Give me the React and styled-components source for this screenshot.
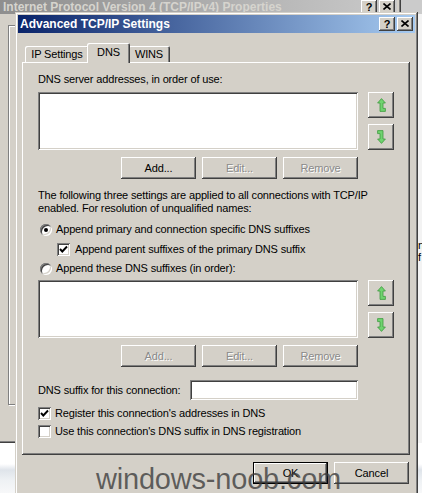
import React from 'react';
import styled, { createGlobalStyle, css } from 'styled-components';

const FACE = '#d4d0c8';

const GlobalStyle = createGlobalStyle`
  html, body { margin: 0; padding: 0; }
  body {
    width: 422px;
    height: 493px;
    overflow: hidden;
    font-family: "Liberation Sans", Arial, sans-serif;
    font-size: 11px;
    color: #000;
  }
  * { box-sizing: border-box; }
`;

const raisedEdge = css`
  box-shadow: inset -1px -1px #404040, inset 1px 1px #ffffff,
    inset -2px -2px #808080, inset 2px 2px ${FACE};
`;
const sunkenEdge = css`
  box-shadow: inset 1px 1px #808080, inset -1px -1px #ffffff,
    inset 2px 2px #404040, inset -2px -2px ${FACE};
`;
const windowEdge = css`
  box-shadow: inset -1px -1px #404040, inset 1px 1px ${FACE},
    inset -2px -2px #808080, inset 2px 2px #ffffff;
`;
const defaultEdge = css`
  box-shadow: inset 0 0 0 1px #000000, inset -2px -2px #404040,
    inset 2px 2px #ffffff, inset -3px -3px #808080;
`;

const Desktop = styled.div`
  position: relative;
  width: 422px;
  height: 493px;
  overflow: hidden;
  background: linear-gradient(to bottom, #ffffff 0, #ffffff 464px, #dfe4ea 470px, #eef1f4 480px, #f7f8f9 493px);
`;

const FarWindow = styled.div`
  position: absolute;
  left: 401px;
  top: 0;
  width: 40px;
  height: 443px;
  background: #f3f3f3;
  display: flex;
  flex-direction: column;
`;
const FarTitle = styled.div`
  height: 14px;
  background: #cbcbcb;
`;
const FarText = styled.div`
  padding: 225px 0 0 17px;
  line-height: 12px;
  white-space: pre;
`;

const BackWindow = styled.div`
  position: absolute;
  left: -4px;
  top: -8px;
  width: 405px;
  height: 451px;
  background: ${FACE};
  padding: 4px;
  ${windowEdge}
  display: flex;
  flex-direction: column;
`;

const Caption = styled.div`
  height: 18px;
  flex: none;
  display: flex;
  align-items: center;
  justify-content: space-between;
  padding: ${(p) => p.$pad};
  background: ${(p) =>
    p.$active
      ? 'linear-gradient(to right, #0a246a, #a6caf0)'
      : 'linear-gradient(to right, #8e8e8e, #cacaca)'};
  color: ${(p) => (p.$active ? '#ffffff' : '#d6d4ce')};
  font-weight: bold;
  font-size: 12px;
  white-space: nowrap;
`;

const CaptionButtons = styled.div`
  display: flex;
  gap: 2px;
`;

const CapButton = styled.div`
  width: 16px;
  height: 14px;
  background: ${FACE};
  ${raisedEdge}
  display: flex;
  align-items: center;
  justify-content: center;
  color: #000;
  font-size: 11px;
  font-weight: bold;
  padding-bottom: 1px;
`;

const GroupBox = styled.div`
  margin: 11px 0 0 8px;
  height: 380px;
  border: 1px solid #808080;
  box-shadow: inset 1px 1px #ffffff, 1px 1px #ffffff;
`;

const Dialog = styled.div`
  position: absolute;
  left: 15px;
  top: 12px;
  width: 403px;
  height: 500px;
  background: ${FACE};
  padding: 3px;
  ${windowEdge}
  display: flex;
  flex-direction: column;
`;

const DialogBody = styled.div`
  padding: 10px 5px 0 4px;
  display: flex;
  flex-direction: column;
`;

const TabStrip = styled.div`
  position: relative;
  z-index: 1;
  height: 19px;
  display: flex;
  align-items: flex-end;
  padding-left: 3px;
`;

const Tab = styled.div`
  position: relative;
  width: ${(p) => p.$w}px;
  height: ${(p) => (p.$selected ? 20 : 16)}px;
  margin: ${(p) => (p.$selected ? '0 -2px -1px' : '0')};
  z-index: ${(p) => (p.$selected ? 2 : 1)};
  background: ${FACE};
  border-radius: 2px 2px 0 0;
  box-shadow: inset 1px 1px #ffffff, inset -1px 0 #404040, inset -2px 0 #808080;
  display: flex;
  align-items: center;
  justify-content: center;
  padding-bottom: ${(p) => (p.$selected ? 3 : 0)}px;
  letter-spacing: -0.15px;
`;

const Panel = styled.div`
  height: 393px;
  background: ${FACE};
  ${raisedEdge}
  padding: 11px 0 0 16px;
  display: flex;
  flex-direction: column;
  letter-spacing: -0.15px;
`;

const Line = styled.div`
  height: 13px;
  line-height: 13px;
  margin-top: ${(p) => p.$mt || 0}px;
  white-space: nowrap;
`;

const Paragraph = styled.div`
  line-height: 13px;
  margin-top: ${(p) => p.$mt}px;
  white-space: nowrap;
`;

const ListRow = styled.div`
  display: flex;
  gap: 10px;
  margin-top: ${(p) => p.$mt}px;
`;

const ListBox = styled.div`
  width: 320px;
  height: 58px;
  background: #ffffff;
  ${sunkenEdge}
`;

const Mover = styled.div`
  width: 26px;
  display: flex;
  flex-direction: column;
  justify-content: space-between;
`;

const MoveButton = styled.div`
  width: 26px;
  height: 26px;
  background: ${FACE};
  ${raisedEdge}
  display: flex;
  align-items: center;
  justify-content: center;
`;

const ButtonRow = styled.div`
  width: ${(p) => p.$w}px;
  display: flex;
  justify-content: flex-end;
  gap: 6px;
  margin-top: ${(p) => p.$mt}px;
  padding-right: ${(p) => p.$pr || 0}px;
`;

const PushButton = styled.button`
  width: 75px;
  height: 22px;
  border: none;
  padding: 0;
  margin: 0;
  background: ${FACE};
  font: inherit;
  letter-spacing: -0.15px;
  ${(p) => (p.$default ? defaultEdge : raisedEdge)}
  color: ${(p) => (p.$disabled ? '#8a8a8a' : '#000000')};
  text-shadow: ${(p) => (p.$disabled ? '1px 1px #ffffff' : 'none')};
  display: flex;
  align-items: center;
  justify-content: center;
`;

const OptionRow = styled.div`
  height: 13px;
  display: flex;
  align-items: center;
  gap: ${(p) => p.$gap}px;
  margin-top: ${(p) => p.$mt}px;
  padding-left: ${(p) => p.$pl}px;
  white-space: nowrap;
  line-height: 13px;
`;

const Radio = styled.span`
  width: 12px;
  height: 12px;
  flex: none;
  border-radius: 50%;
  background: #ffffff;
  box-shadow: inset 1px 1px #808080, inset -1px -1px #ffffff,
    inset 2px 2px #404040, inset -2px -2px ${FACE};
  display: flex;
  align-items: center;
  justify-content: center;
  &::after {
    content: '';
    width: 4px;
    height: 4px;
    border-radius: 50%;
    background: ${(p) => (p.$on ? '#000' : 'transparent')};
  }
`;

const Check = styled.span`
  width: 13px;
  height: 13px;
  flex: none;
  background: #ffffff;
  ${sunkenEdge}
  display: flex;
  align-items: center;
  justify-content: center;
`;

const SuffixRow = styled.div`
  display: flex;
  align-items: center;
  margin-top: ${(p) => p.$mt}px;
  height: 20px;
`;

const SuffixLabel = styled.span`
  width: 152px;
  white-space: nowrap;
`;

const TextInput = styled.div`
  width: 168px;
  height: 20px;
  background: #ffffff;
  ${sunkenEdge}
`;

const Watermark = styled.div`
  position: absolute;
  left: 96px;
  top: 467px;
  font-family: "Liberation Sans", Arial, sans-serif;
  font-size: 29px;
  line-height: 24px;
  letter-spacing: -0.2px;
  color: rgba(60, 60, 60, 0.78);
  white-space: nowrap;
  pointer-events: none;
`;

const CloseGlyph = () => (
  <svg width="8" height="7" viewBox="0 0 8 7">
    <path d="M0.5 0.5 L7.5 6.5 M7.5 0.5 L0.5 6.5" stroke="#000" strokeWidth="1.6" />
  </svg>
);

const CheckGlyph = () => (
  <svg width="9" height="9" viewBox="0 0 9 9">
    <path d="M1 4 L3.3 6.5 L8 1.5" fill="none" stroke="#000" strokeWidth="1.9" />
  </svg>
);

const ArrowGlyph = ({ down }) => (
  <svg
    width="9"
    height="14"
    viewBox="0 0 9 14"
    style={down ? { transform: 'rotate(180deg)' } : undefined}
  >
    <path
      d="M4.5 0.6 L8.4 5 L6 5 L6 10.4 L8.4 10.4 L8.4 13.4 L3 13.4 L3 5 L0.6 5 Z"
      fill="#6fd36f"
      stroke="#3f9a3f"
      strokeWidth="0.8"
    />
  </svg>
);

const TitleButtons = () => (
  <CaptionButtons>
    <CapButton>?</CapButton>
    <CapButton>
      <CloseGlyph />
    </CapButton>
  </CaptionButtons>
);

const ListWithMovers = ({ mt }) => (
  <ListRow $mt={mt}>
    <ListBox />
    <Mover>
      <MoveButton>
        <ArrowGlyph />
      </MoveButton>
      <MoveButton>
        <ArrowGlyph down />
      </MoveButton>
    </Mover>
  </ListRow>
);

export default function App() {
  return (
    <>
      <GlobalStyle />
      <Desktop>
        <FarWindow>
          <FarTitle />
          <FarText>{'n\nf'}</FarText>
        </FarWindow>

        <BackWindow>
          <Caption $pad="4px 2px 0 3px">
            <span>Internet Protocol Version 4 (TCP/IPv4) Properties</span>
            <TitleButtons />
          </Caption>
          <GroupBox />
        </BackWindow>

        <Dialog>
          <Caption $active $pad="0 2px 0 2px">
            <span>Advanced TCP/IP Settings</span>
            <TitleButtons />
          </Caption>
          <DialogBody>
            <TabStrip>
              <Tab $w={64}>IP Settings</Tab>
              <Tab $w={43} $selected>
                DNS
              </Tab>
              <Tab $w={42}>WINS</Tab>
            </TabStrip>
            <Panel>
              <Line>DNS server addresses, in order of use:</Line>
              <ListWithMovers mt={6} />
              <ButtonRow $w={320} $mt={7}>
                <PushButton>Add...</PushButton>
                <PushButton $disabled>Edit...</PushButton>
                <PushButton $disabled>Remove</PushButton>
              </ButtonRow>
              <Paragraph $mt={10}>
                The following three settings are applied to all connections with TCP/IP
                <br />
                enabled. For resolution of unqualified names:
              </Paragraph>
              <OptionRow $mt={8} $pl={2} $gap={4}>
                <Radio $on />
                <span>Append primary and connection specific DNS suffixes</span>
              </OptionRow>
              <OptionRow $mt={7} $pl={19} $gap={5}>
                <Check>
                  <CheckGlyph />
                </Check>
                <span>Append parent suffixes of the primary DNS suffix</span>
              </OptionRow>
              <OptionRow $mt={6} $pl={2} $gap={4}>
                <Radio />
                <span>Append these DNS suffixes (in order):</span>
              </OptionRow>
              <ListWithMovers mt={5} />
              <ButtonRow $w={320} $mt={7}>
                <PushButton $disabled>Add...</PushButton>
                <PushButton $disabled>Edit...</PushButton>
                <PushButton $disabled>Remove</PushButton>
              </ButtonRow>
              <SuffixRow $mt={13}>
                <SuffixLabel>DNS suffix for this connection:</SuffixLabel>
                <TextInput />
              </SuffixRow>
              <OptionRow $mt={7} $pl={0} $gap={4}>
                <Check>
                  <CheckGlyph />
                </Check>
                <span>Register this connection's addresses in DNS</span>
              </OptionRow>
              <OptionRow $mt={5} $pl={0} $gap={4}>
                <Check />
                <span>Use this connection's DNS suffix in DNS registration</span>
              </OptionRow>
            </Panel>
            <ButtonRow $mt={7} $pr={1}>
              <PushButton $default>OK</PushButton>
              <PushButton>Cancel</PushButton>
            </ButtonRow>
          </DialogBody>
        </Dialog>

        <Watermark>windows-noob.com</Watermark>
      </Desktop>
    </>
  );
}
